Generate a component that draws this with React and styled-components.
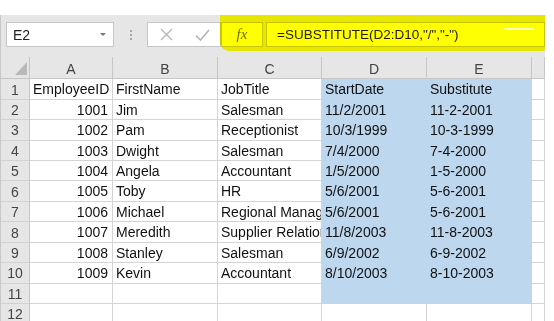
import React from 'react';
import styled, { createGlobalStyle } from 'styled-components';

const GlobalStyle = createGlobalStyle`
  html, body {
    margin: 0;
    padding: 0;
    background: #fff;
  }
  body {
    font-family: "Liberation Sans", Arial, sans-serif;
  }
`;

const Page = styled.div`
  width: 554px;
  height: 321px;
  overflow: hidden;
  padding-top: 15px;
  box-sizing: border-box;
  background: #fff;
`;

const Window = styled.div`
  position: relative;
  width: 545px;
  background: #e6e6e6;
  border-left: 1px solid #c8c8c8;
  box-sizing: border-box;
`;

const FormulaBar = styled.div`
  display: flex;
  align-items: flex-start;
  height: 42px;
  padding: 7px 0 0 5px;
  box-sizing: border-box;
`;

const Box = styled.div`
  height: 25px;
  background: #fff;
  border: 1px solid #c6c6c6;
  box-sizing: border-box;
  display: flex;
  align-items: center;
  flex: ${({ $grow }) => ($grow ? '1' : 'none')};
  width: ${({ $w }) => ($w ? `${$w}px` : 'auto')};
  margin-left: ${({ $ml }) => $ml || 0}px;
`;

const NameText = styled.span`
  flex: 1;
  padding-left: 6px;
  font-size: 14px;
  color: #222;
`;

const Caret = styled.span`
  width: 0;
  height: 0;
  margin-right: 7px;
  border-left: 3.5px solid transparent;
  border-right: 3.5px solid transparent;
  border-top: 3.5px solid #777;
`;

const Dots = styled.div`
  width: 33px;
  height: 25px;
  display: flex;
  flex-direction: column;
  align-items: center;
  justify-content: center;
  gap: 2px;
  span {
    width: 2px;
    height: 2px;
    background: #a6a6a6;
  }
`;

const IconSlot = styled.div`
  flex: 1;
  display: flex;
  align-items: center;
  justify-content: center;
`;

const Fx = styled.span`
  width: 100%;
  text-align: center;
  font-family: "Liberation Serif", "Times New Roman", serif;
  font-style: italic;
  font-size: 15px;
  color: #6f6f6f;
`;

const FormulaText = styled.span`
  padding-left: 10px;
  font-size: 13.5px;
  color: #1e1e1e;
  white-space: nowrap;
`;

const Highlight = styled.div`
  position: absolute;
  top: 0;
  left: 219px;
  width: 325px;
  height: 36px;
  background: #ffff00;
  mix-blend-mode: multiply;
  border-bottom-left-radius: 9px;
  border-bottom-right-radius: 2px;
  pointer-events: none;
`;

const Streak = styled.div`
  position: absolute;
  left: 284px;
  top: 13px;
  width: 30px;
  height: 2px;
  border-radius: 1px;
  background: rgba(255, 255, 255, 0.75);
`;

const Sheet = styled.div`
  display: grid;
  grid-template-columns: 29px 83px 105px 104px 105px 105px 13px;
  grid-template-rows: 22.3px repeat(12, 20.45px);
  background: #fff;
`;

const Corner = styled.div`
  background: #e6e6e6;
  border-right: 1px solid #c6c6c6;
  border-bottom: 1px solid #c6c6c6;
  box-sizing: border-box;
  display: flex;
  align-items: flex-end;
  justify-content: flex-end;
  padding: 0 2px 3px 0;
  &::after {
    content: '';
    width: 0;
    height: 0;
    border-left: 12px solid transparent;
    border-bottom: 13px solid #b9b9b9;
  }
`;

const ColHead = styled.div`
  background: #e6e6e6;
  border-right: 1px solid #c6c6c6;
  border-bottom: 1px solid #c6c6c6;
  box-sizing: border-box;
  display: flex;
  align-items: center;
  justify-content: center;
  padding-top: 2px;
  font-size: 14px;
  color: #444;
`;

const RowHead = styled.div`
  background: #e6e6e6;
  border-right: 1px solid #c6c6c6;
  border-bottom: 1px solid #d2d2d2;
  box-sizing: border-box;
  display: flex;
  align-items: center;
  justify-content: center;
  padding-top: 1px;
  font-size: 14px;
  color: #444;
`;

const Cell = styled.div`
  background: ${({ $fill }) => ($fill ? '#bdd7ee' : '#fff')};
  border-right: 1px solid ${({ $fill }) => ($fill ? '#bdd7ee' : '#d4d4d4')};
  border-bottom: 1px solid ${({ $fill }) => ($fill ? '#bdd7ee' : '#d4d4d4')};
  box-sizing: border-box;
  overflow: hidden;
  white-space: nowrap;
  font-size: 14px;
  line-height: 19.45px;
  padding: 1px 4px 0 3px;
  color: #111;
  text-align: ${({ $num }) => ($num ? 'right' : 'left')};
`;

const columns = ['A', 'B', 'C', 'D', 'E', ''];

const rows = [
  ['EmployeeID', 'FirstName', 'JobTitle', 'StartDate', 'Substitute'],
  [1001, 'Jim', 'Salesman', '11/2/2001', '11-2-2001'],
  [1002, 'Pam', 'Receptionist', '10/3/1999', '10-3-1999'],
  [1003, 'Dwight', 'Salesman', '7/4/2000', '7-4-2000'],
  [1004, 'Angela', 'Accountant', '1/5/2000', '1-5-2000'],
  [1005, 'Toby', 'HR', '5/6/2001', '5-6-2001'],
  [1006, 'Michael', 'Regional Manager', '5/6/2001', '5-6-2001'],
  [1007, 'Meredith', 'Supplier Relations', '11/8/2003', '11-8-2003'],
  [1008, 'Stanley', 'Salesman', '6/9/2002', '6-9-2002'],
  [1009, 'Kevin', 'Accountant', '8/10/2003', '8-10-2003'],
  ['', '', '', '', ''],
  ['', '', '', '', ''],
];

const CancelIcon = () => (
  <svg width="13" height="13" viewBox="0 0 13 13">
    <path d="M1 1 L12 12 M12 1 L1 12" stroke="#b5b5b5" strokeWidth="1.3" fill="none" />
  </svg>
);

const EnterIcon = () => (
  <svg width="15" height="12" viewBox="0 0 15 12">
    <path d="M1 6.5 L5.5 11 L14 1" stroke="#b5b5b5" strokeWidth="1.6" fill="none" />
  </svg>
);

const App = () => {
  return (
    <Page>
      <GlobalStyle />
      <Window>
        <FormulaBar>
          <Box $w={108}>
            <NameText>E2</NameText>
            <Caret />
          </Box>
          <Dots>
            <span />
            <span />
            <span />
          </Dots>
          <Box $w={74}>
            <IconSlot><CancelIcon /></IconSlot>
            <IconSlot><EnterIcon /></IconSlot>
          </Box>
          <Box $w={42}>
            <Fx>fx</Fx>
          </Box>
          <Box $grow $ml={3}>
            <FormulaText>=SUBSTITUTE(D2:D10,"/","-")</FormulaText>
          </Box>
        </FormulaBar>
        <Highlight>
          <Streak />
        </Highlight>
        <Sheet>
          <Corner />
          {columns.map((c, i) => (
            <ColHead key={i}>{c}</ColHead>
          ))}
          {rows.map((row, r) => (
            <React.Fragment key={r}>
              <RowHead>{r + 1}</RowHead>
              {row.map((v, c) => (
                <Cell
                  key={c}
                  $num={typeof v === 'number'}
                  $fill={(c === 3 || c === 4) && r < 11}
                >
                  {v}
                </Cell>
              ))}
              <Cell />
            </React.Fragment>
          ))}
        </Sheet>
      </Window>
    </Page>
  );
};

export default App;
